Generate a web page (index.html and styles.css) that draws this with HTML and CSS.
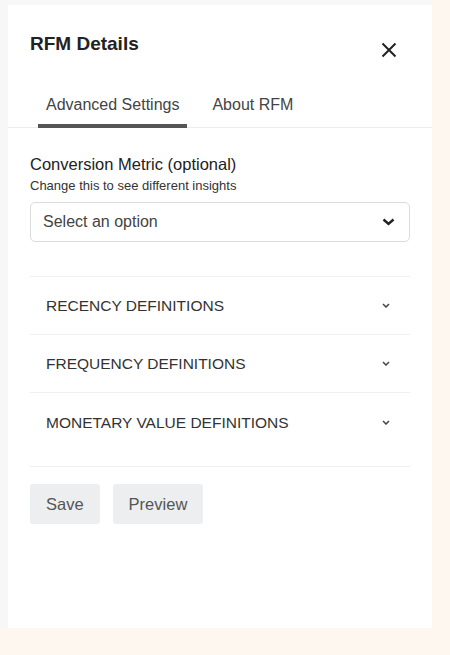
FILE: index.html
```html
<!DOCTYPE html>
<html>
<head>
<meta charset="utf-8">
<link rel="stylesheet" href="styles.css">
</head>
<body>
<div class="page">
  <div class="gutter"></div>
  <div class="panel">
    <div class="header">
      <h1 class="title">RFM Details</h1>
      <button class="close" aria-label="Close">
        <svg width="16" height="16" viewBox="0 0 16 16"><path d="M1.5 1.5 L14.5 14.5 M14.5 1.5 L1.5 14.5" stroke="#222" stroke-width="2" fill="none"/></svg>
      </button>
    </div>
    <div class="tabs">
      <div class="tab active">Advanced Settings</div>
      <div class="tab">About RFM</div>
    </div>
    <div class="body">
      <div class="field">
        <div class="label">Conversion Metric (optional)</div>
        <div class="hint">Change this to see different insights</div>
        <div class="select">
          <span>Select an option</span>
          <svg width="13" height="8" viewBox="0 0 13 8"><path d="M1.5 1.5 L6.5 6 L11.5 1.5" stroke="#222" stroke-width="2.4" fill="none"/></svg>
        </div>
      </div>
      <div class="accordion">
        <div class="acc-row"><span>RECENCY DEFINITIONS</span><svg width="8" height="5" viewBox="0 0 8 5"><path d="M1 1 L4 4 L7 1" stroke="#444" stroke-width="1.5" fill="none"/></svg></div>
        <div class="acc-row"><span>FREQUENCY DEFINITIONS</span><svg width="8" height="5" viewBox="0 0 8 5"><path d="M1 1 L4 4 L7 1" stroke="#444" stroke-width="1.5" fill="none"/></svg></div>
        <div class="acc-row"><span>MONETARY VALUE DEFINITIONS</span><svg width="8" height="5" viewBox="0 0 8 5"><path d="M1 1 L4 4 L7 1" stroke="#444" stroke-width="1.5" fill="none"/></svg></div>
      </div>
      <div class="actions">
        <button class="btn save">Save</button>
        <button class="btn preview">Preview</button>
      </div>
    </div>
  </div>
</div>
</body>
</html>
```

FILE: styles.css
```css
* { box-sizing: border-box; }
html, body { margin: 0; padding: 0; }
body {
  background: #fef7ef;
  font-family: "Liberation Sans", Arial, sans-serif;
  width: 450px;
  height: 655px;
  overflow: hidden;
}
.page {
  display: flex;
  height: 628px;
  background: #f8f8f8;
  width: 432px;
}
.gutter {
  width: 8px;
  background: #f7f7f7;
}
.panel {
  margin-top: 5px;
  width: 424px;
  background: #fff;
  display: flex;
  flex-direction: column;
}
.header {
  display: flex;
  justify-content: space-between;
  align-items: flex-start;
  padding: 28px 35px 0 22px;
  height: 84px;
}
.title {
  margin: 0;
  font-size: 19px;
  font-weight: 600;
  color: #222;
  line-height: 22px;
}
.close {
  border: 0;
  background: none;
  padding: 0;
  margin-top: 9px;
  width: 16px;
  height: 16px;
}
.close svg { display: block; }
.tabs {
  display: flex;
  padding-left: 30px;
  border-bottom: 1px solid #ececec;
  height: 39px;
}
.tab {
  font-size: 16px;
  color: #444;
  padding: 0 8px;
  height: 38px;
  line-height: 32px;
  margin-right: 17px;
}
.tab.active {
  border-bottom: 4px solid #555;
  height: 39px;
  margin-bottom: -1px;
}
.body {
  padding: 0 22px;
}
.field {
  padding-top: 26px;
  padding-bottom: 34px;
  border-bottom: 1px solid #f0f0f0;
}
.label {
  font-size: 16.5px;
  color: #222;
  line-height: 20px;
}
.hint {
  font-size: 13px;
  color: #333;
  line-height: 16px;
  margin-top: 4px;
  margin-bottom: 8px;
}
.select {
  height: 40px;
  border: 1px solid #dcdcdc;
  border-radius: 5px;
  display: flex;
  align-items: center;
  justify-content: space-between;
  padding: 0 14px 0 12px;
  font-size: 16px;
  color: #444;
}
.select svg { display: block; }
.accordion {
  border-bottom: 1px solid #f0f0f0;
}
.acc-row {
  height: 58px;
  display: flex;
  align-items: center;
  justify-content: space-between;
  padding: 0 20px 0 16px;
  font-size: 15.5px;
  color: #333;
  border-bottom: 1px solid #f0f0f0;
}
.acc-row:last-child { border-bottom: 0; height: 73px; padding-bottom: 14px; }
.acc-row svg { display: block; }
.actions {
  display: flex;
  gap: 13px;
  padding-top: 17px;
}
.btn {
  border: 0;
  background: #eceeef;
  border-radius: 3px;
  height: 40px;
  font-family: inherit;
  font-size: 16.5px;
  color: #555;
  padding: 0 16px;
}
```
